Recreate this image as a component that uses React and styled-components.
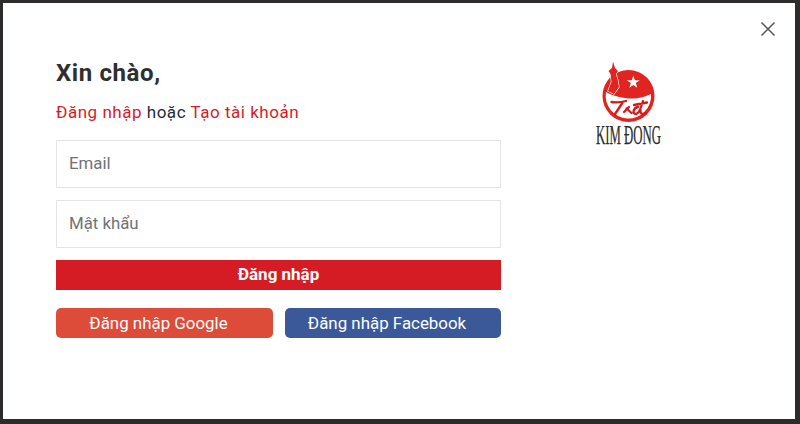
import React from 'react';
import styled, { createGlobalStyle } from 'styled-components';

const GlobalStyle = createGlobalStyle`
  html, body {
    margin: 0;
    padding: 0;
    background: #2d2c2a;
  }
  * {
    box-sizing: border-box;
  }
`;

const Backdrop = styled.div`
  width: 800px;
  height: 424px;
  padding: 3px 5px 5px 3px;
  overflow: hidden;
  background: #2d2c2a;
  font-family: Roboto, "Liberation Sans", sans-serif;
`;

const Modal = styled.div`
  position: relative;
  width: 792px;
  height: 416px;
  padding: 53px 53px 0;
  display: flex;
  background: #fff;
`;

const CloseButton = styled.button`
  position: absolute;
  top: 17px;
  right: 18px;
  width: 18px;
  height: 18px;
  padding: 0;
  border: 0;
  background: none;
  display: flex;
  svg {
    display: block;
  }
`;

const FormColumn = styled.div`
  width: 445px;
  display: flex;
  flex-direction: column;
`;

const Title = styled.h2`
  margin: 0;
  height: 34px;
  font-size: 24px;
  line-height: 34px;
  font-weight: 700;
  letter-spacing: 0.6px;
  color: #2f2f2f;
`;

const Subtitle = styled.p`
  margin: 10px 0 0;
  height: 24px;
  font-size: 17px;
  line-height: 24px;
  letter-spacing: 0.52px;
  color: #1f2a3a;
`;

const RedLink = styled.a`
  color: #d51c24;
`;

const Field = styled.input`
  display: block;
  width: 100%;
  height: 48px;
  margin-top: ${(p) => p.$top}px;
  padding: 0 12px 2px;
  border: 1px solid #e4e4e4;
  outline: 0;
  font-family: inherit;
  font-size: 16.8px;
  color: #333;
  &::placeholder {
    color: #6f7276;
    opacity: 1;
  }
`;

const SubmitButton = styled.button`
  width: 100%;
  height: 30px;
  margin-top: 12px;
  padding: 0 0 2px;
  border: 0;
  background: #d51c24;
  color: #fff;
  font-family: inherit;
  font-size: 17px;
  font-weight: 700;
`;

const SocialRow = styled.div`
  display: grid;
  grid-template-columns: 217px 216px;
  gap: 12px;
  margin-top: 18px;
`;

const SocialButton = styled.button`
  height: 30px;
  padding: 0 12px 0 0;
  border: 0;
  border-radius: 5px;
  background: ${(p) => p.$bg};
  color: #fff;
  font-family: inherit;
  font-size: 16.9px;
`;

const LogoColumn = styled.div`
  flex: 1;
  display: flex;
  justify-content: center;
  padding: 4px 0 0 15px;
`;

const LogoMark = styled.svg`
  display: block;
  overflow: visible;
`;

function Logo() {
  return (
    <LogoMark width="76" height="92" viewBox="0 0 76 92">
      <circle cx="37.5" cy="36" r="26" fill="#e2231f" />
      {/* white lower half, leaves a red ring */}
      <path d="M15 32 C22 36 32 38.5 41 38.5 C48 38.5 55 36.5 60 34 A22.7 22.7 0 1 1 15 32 Z" fill="#fff" />
      {/* flag and bearer on the left edge */}
      <path
        d="M22 1.5 L24 8 L27 11 L25 14 L27 21 L28 27 L23 34 L17 31 L20.5 22 L19.5 14 L17.5 11 L21 8 Z"
        fill="#e2231f"
        stroke="#fff"
        strokeWidth="1.3"
        paintOrder="stroke"
      />
      <path d="M42.3 15.5 l1.5 4.7 h5 l-4 2.9 1.5 4.7 -4 -2.9 -4 2.9 1.5 -4.7 -4 -2.9 h5 Z" fill="#fff" />
      {/* hand written initials */}
      <path
        d="M20.5 42 C26 43 31 42 35 41 M32 42 L24 54 M35.5 48.5 L40.5 53 M38 47 L33 52 M47 47 C42 48 41 54 45 54 C48 54 50 48 52 41 M49.5 50 C49 54 51 55 55 53 M43 45 L56 42.5"
        fill="none"
        stroke="#d7191c"
        strokeWidth="2.3"
        strokeLinecap="round"
      />
      <text x="37.5" y="84" textAnchor="middle" fontFamily="Liberation Serif, serif" fontSize="27" textLength="65" lengthAdjust="spacingAndGlyphs" fill="#2a2a2a" stroke="#2a2a2a" strokeWidth="0.25">KIM ĐONG</text>
    </LogoMark>
  );
}

export default function App() {
  return (
    <>
      <GlobalStyle />
      <Backdrop>
        <Modal>
          <CloseButton aria-label="Đóng">
            <svg width="18" height="18" viewBox="0 0 18 18">
              <path d="M2.5 2.5 L15.5 15.5 M15.5 2.5 L2.5 15.5" stroke="#555" strokeWidth="1.5" fill="none" />
            </svg>
          </CloseButton>
          <FormColumn>
            <Title>Xin chào,</Title>
            <Subtitle>
              <RedLink>Đăng nhập</RedLink> hoặc <RedLink>Tạo tài khoản</RedLink>
            </Subtitle>
            <Field $top={16} placeholder="Email" />
            <Field $top={12} placeholder="Mật khẩu" />
            <SubmitButton>Đăng nhập</SubmitButton>
            <SocialRow>
              <SocialButton $bg="#dd4b39">Đăng nhập Google</SocialButton>
              <SocialButton $bg="#3b5998">Đăng nhập Facebook</SocialButton>
            </SocialRow>
          </FormColumn>
          <LogoColumn>
            <Logo />
          </LogoColumn>
        </Modal>
      </Backdrop>
    </>
  );
}
